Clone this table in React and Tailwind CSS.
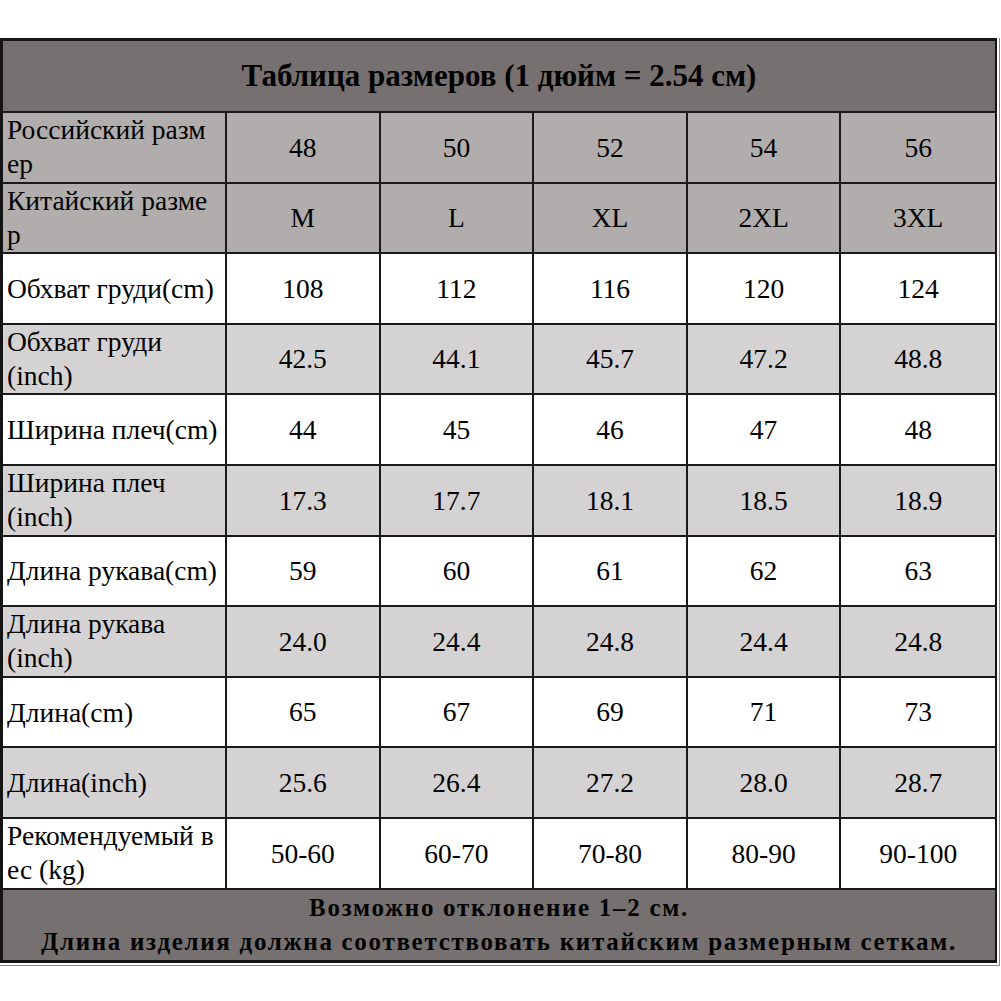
import React from "react";

const rows = [
  { label: ["Российский разм", "ер"], vals: ["48", "50", "52", "54", "56"], bg: "bg-[#b1adac]" },
  { label: ["Китайский разме", "р"], vals: ["M", "L", "XL", "2XL", "3XL"], bg: "bg-[#b1adac]" },
  { label: ["Обхват груди(cm)"], vals: ["108", "112", "116", "120", "124"], bg: "bg-white" },
  { label: ["Обхват груди", "(inch)"], vals: ["42.5", "44.1", "45.7", "47.2", "48.8"], bg: "bg-[#d4d2d2]" },
  { label: ["Ширина плеч(cm)"], vals: ["44", "45", "46", "47", "48"], bg: "bg-white" },
  { label: ["Ширина плеч", "(inch)"], vals: ["17.3", "17.7", "18.1", "18.5", "18.9"], bg: "bg-[#d4d2d2]" },
  { label: ["Длина рукава(cm)"], vals: ["59", "60", "61", "62", "63"], bg: "bg-white" },
  { label: ["Длина рукава", "(inch)"], vals: ["24.0", "24.4", "24.8", "24.4", "24.8"], bg: "bg-[#d4d2d2]" },
  { label: ["Длина(cm)"], vals: ["65", "67", "69", "71", "73"], bg: "bg-white" },
  { label: ["Длина(inch)"], vals: ["25.6", "26.4", "27.2", "28.0", "28.7"], bg: "bg-[#d4d2d2]" },
  { label: ["Рекомендуемый в", "ес (kg)"], vals: ["50-60", "60-70", "70-80", "80-90", "90-100"], bg: "bg-white" },
];

export default function App() {
  return (
    <div className="w-[1001px] h-[1001px] bg-white pt-[38px] text-black" style={{ fontFamily: '"Liberation Serif", "Times New Roman", serif' }}>
      <div className="w-[1000px] border-r border-b border-[#8a8a8a] pr-[2px] pb-[2px]">
        <div className="w-[997px] border-t-[3px] border-l-[3px] border-r-2 border-b-[3px] border-[#141414]">
          <div className="h-[72px] bg-[#767170] border-b-2 border-[#1a1a1a] flex items-center justify-center">
            <span className="text-[31px] font-bold">Таблица размеров (1 дюйм = 2.54 см)</span>
          </div>
          {rows.map((r, i) => (
            <div key={i} className={`grid grid-cols-[224px_repeat(5,1fr)] h-[70.6px] border-b-2 border-[#1a1a1a] ${r.bg}`}>
              <div className="border-r-2 border-[#1a1a1a] pl-[4px] text-[27.5px] overflow-hidden flex flex-col justify-center whitespace-nowrap">
                {r.label.length === 2 ? (
                  <div className="leading-[34px]">
                    <div>{r.label[0]}</div>
                    <div>{r.label[1]}</div>
                  </div>
                ) : (
                  <div className="leading-[35px]">{r.label[0]}</div>
                )}
              </div>
              {r.vals.map((v, j) => (
                <div key={j} className={`flex items-center justify-center text-[27.5px] ${j < 4 ? "border-r-2 border-[#1a1a1a]" : ""}`}>
                  {v}
                </div>
              ))}
            </div>
          ))}
          <div className="h-[70px] bg-[#767170] flex flex-col items-center justify-center font-bold text-[25px] tracking-[1.7px] leading-[34px] whitespace-nowrap">
            <div>Возможно отклонение 1–2 см.</div>
            <div>Длина изделия должна соответствовать китайским размерным сеткам.</div>
          </div>
        </div>
      </div>
    </div>
  );
}
